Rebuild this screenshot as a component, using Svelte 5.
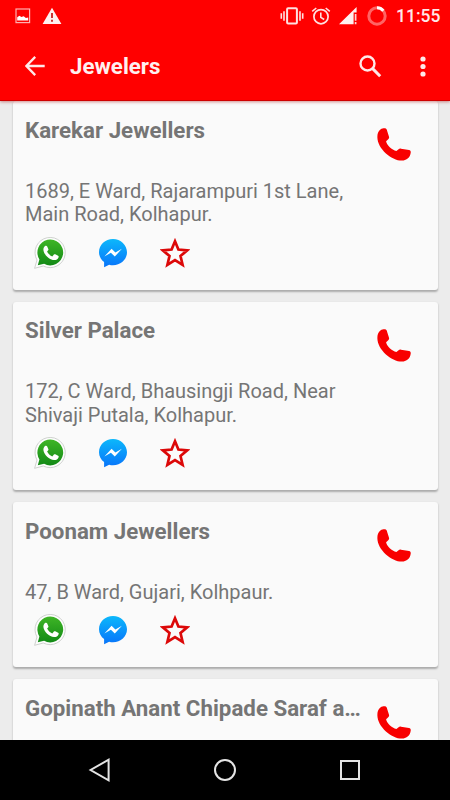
<script>
  /**
   * Jewelers listing - cards with contact shortcuts
   */
  const title = 'Jewelers';
  const time = '11:55';

  const shops = [
    {
      name: 'Karekar Jewellers',
      address: ['1689, E Ward, Rajarampuri 1st Lane,', 'Main Road, Kolhapur.']
    },
    {
      name: 'Silver Palace',
      address: ['172, C Ward, Bhausingji Road, Near', 'Shivaji Putala, Kolhapur.']
    },
    {
      name: 'Poonam Jewellers',
      address: ['47, B Ward, Gujari, Kolhpaur.']
    },
    {
      name: 'Gopinath Anant Chipade Saraf a…',
      address: []
    }
  ];
</script>

<div class="screen">
  <header>
    <div class="status-bar">
      <svg class="picture" width="16" height="16" viewBox="0 0 16 16">
        <rect x="1" y="1" width="13.6" height="13.6" fill="none" stroke="#ffb0b0" stroke-width="1.2" />
        <path d="M2.2 12.6V9.3l2.2-1.6 2 1.3 2.3-.8 2.2 1.8 2.3-.5v3.1z" fill="#fff" />
      </svg>
      <svg class="warning" width="20" height="18" viewBox="0 0 20 18">
        <path d="M10 .8 19.4 17H.6z" fill="#fff0f0" />
        <path d="M10 6v5M10 12.8v2" stroke="#c33" stroke-width="2" />
      </svg>
      <div class="status-icons">
        <svg width="24" height="18" viewBox="0 0 24 18">
          <rect x="7.1" y="1.2" width="9.8" height="15.4" rx="1" fill="none" stroke="#ffe0e0" stroke-width="2" />
          <path d="M4 4.3v9.4M1.3 6.3v5.4M20 4.3v9.4M22.7 6.3v5.4" stroke="#ffe0e0" stroke-width="1.6" />
        </svg>
        <svg class="alarm" width="20" height="18" viewBox="0 0 20 18">
          <circle cx="10" cy="9.7" r="7.1" fill="none" stroke="#ffe0e0" stroke-width="1.7" />
          <path d="M1.2 4.3 5.3 1M18.8 4.3 14.7 1M9.8 5.5v4.8l3.4 2.2" fill="none" stroke="#ffe0e0" stroke-width="1.6" />
        </svg>
        <svg class="signal" width="19" height="18" viewBox="0 0 19 18">
          <path d="M0 17.2 17.6 0v5.4h-3v11.8z" fill="#fff0f0" />
          <path d="M16.6 7v6.8M16.6 15.1v2.2" stroke="#ffd0d0" stroke-width="1.7" />
        </svg>
        <svg class="battery" width="20" height="20" viewBox="0 0 20 20">
          <circle cx="10" cy="10" r="8.2" fill="none" stroke="#ff6464" stroke-width="3" />
          <path d="M10 1.8a8.2 8.2 0 0 1 6.3 2.9" fill="none" stroke="#fff" stroke-width="3" />
        </svg>
        <span class="time">{time}</span>
      </div>
    </div>

    <div class="app-bar">
      <button class="back" aria-label="back">
        <svg width="20" height="20" viewBox="0 0 20 20">
          <path d="M19.7 10H1.8M10.2 .9 1.4 10l8.8 9.1" fill="none" stroke="#ffe8e8" stroke-width="2.3" />
        </svg>
      </button>
      <h1>{title}</h1>
      <button class="search" aria-label="search">
        <svg width="23" height="23" viewBox="0 0 23 23">
          <circle cx="8.5" cy="8.5" r="7" fill="none" stroke="#ffe8e8" stroke-width="2.4" />
          <path d="m13.4 13.4 7.8 7.8" stroke="#ffe8e8" stroke-width="3" />
        </svg>
      </button>
      <button class="more" aria-label="more options">
        <svg width="6" height="21" viewBox="0 0 6 21">
          <g fill="#ffe8e8">
            <circle cx="3" cy="3" r="2.6" />
            <circle cx="3" cy="10.5" r="2.6" />
            <circle cx="3" cy="18" r="2.6" />
          </g>
        </svg>
      </button>
    </div>
  </header>

  <main>
    {#each shops as shop}
      <article class="card">
        <div class="card-head">
          <h2>{shop.name}</h2>
          <button class="call" aria-label="call">
            <svg width="34" height="34" viewBox="0 0 34 34">
              <path
                d="M.4 8.2C.5 4.3 2.5 1.2 5.5.5 7.5 0 9.2.3 9.7 1.5l2.3 7.2c.4 1.300-.1 2.100-1 2.900l-1.900 1.600c.6 3.800 5.700 8.700 10.300 9.700l2.200-1.700c.7-.6 1.500-.7 2.400-.5l8 1.400c1.500.3 1.900 1.300 1.700 2.700-.5 4.300-3.400 7-7.100 7.700C15.600 34-.5 20.300.4 8.200z"
                fill="#f80000"
              />
            </svg>
          </button>
        </div>

        <p class="address">
          {#each shop.address as line}
            <span>{line}</span>
          {/each}
        </p>

        <div class="actions">
          <svg class="whatsapp" width="32" height="32" viewBox="0 0 32 32">
            <defs>
              <linearGradient id="green" x1="0" y1="0" x2="0" y2="1">
                <stop offset="0" stop-color="#3fb526" />
                <stop offset="1" stop-color="#128a16" />
              </linearGradient>
            </defs>
            <path
              d="M.6 31.300 3 23A15.100 15.100 0 1 1 9.300 29z"
              fill="#fdfdfd"
              stroke="#c9cdc9"
              stroke-width=".9"
            />
            <path d="M3.800 28.300 5.400 22.400A12.900 12.900 0 1 1 10.100 26.800z" fill="url(#green)" />
            <path
              d="M11 9.100c.8-.7 1.800-.6 2.200.3l1.200 2.800c.2.6-.1 1.100-1.300 2.400 1.100 2.300 2.800 3.900 5.200 4.800l1.600-1.800c.4-.5.8-.5 1.400-.3l2.800 1.400c.7.4.7.7.5 1.500-.5 2-2.800 3-4.500 2.900-4.800-.4-10.200-5.300-10.700-10.100-.1-1.700.6-3 1.600-3.900z"
              fill="#fff"
            />
          </svg>
          <svg class="messenger" width="30" height="30" viewBox="0 0 30 30">
            <defs>
              <linearGradient id="blue" x1="0" y1="0" x2="0" y2="1">
                <stop offset="0" stop-color="#0cb8fb" />
                <stop offset="1" stop-color="#0874fa" />
              </linearGradient>
            </defs>
            <path
              d="M15 .9C7.200.9 1 6.800 1 14.200c0 4 2 7.500 5.100 9.900v5.200l5-2.600c1.200.4 2.600.5 3.900.5 7.800 0 14-5.800 14-13S22.800.9 15 .9z"
              fill="url(#blue)"
            />
            <path d="m6.400 18.500 7.200-7.800 3.800 3.800 6.500-3.800-7.100 7.900-3.900-3.900z" fill="#fff" />
          </svg>
          <svg class="star" width="30" height="30" viewBox="0 0 30 30">
            <path
              d="m15 3.300 3.400 8.200 8.800.8-6.700 5.800 2.100 8.700-7.600-4.600-7.600 4.600 2.100-8.700-6.700-5.800 8.800-.8z"
              fill="none"
              stroke="#dc0808"
              stroke-width="2.700"
            />
          </svg>
        </div>
      </article>
    {/each}
  </main>

  <nav>
    <svg width="24" height="26" viewBox="0 0 24 26">
      <path d="M20.600 2.700v20.600L2.600 13z" fill="none" stroke="#e4e4e4" stroke-width="2" />
    </svg>
    <svg width="24" height="24" viewBox="0 0 24 24">
      <circle cx="12" cy="12" r="10" fill="none" stroke="#e4e4e4" stroke-width="2" />
    </svg>
    <svg width="24" height="24" viewBox="0 0 24 24">
      <rect x="3" y="3" width="18" height="18" fill="none" stroke="#e4e4e4" stroke-width="2" />
    </svg>
  </nav>
</div>

<style>
  .screen {
    width: 450px;
    height: 800px;
    display: flex;
    flex-direction: column;
    overflow: hidden;
    background: #ececec;
    color: #757575;
    font-family: Roboto, sans-serif;
  }

  svg {
    display: block;
    flex: none;
  }

  button {
    padding: 0;
    border: none;
    background: none;
  }

  h1,
  h2,
  p {
    margin: 0;
  }

  header {
    flex: none;
    height: 100px;
    background: #ff0000;
    border-bottom: 1px solid #cf0000;
    box-shadow: 0 1px 3px rgba(160, 0, 0, 0.45);
    z-index: 1;
  }

  .status-bar {
    height: 32px;
    display: flex;
    align-items: center;
    padding: 0 10px 0 15px;
  }

  .warning {
    margin-left: 11px;
  }

  .status-icons {
    display: flex;
    align-items: center;
    margin-left: auto;
  }

  .alarm {
    margin-left: 7px;
  }

  .signal {
    margin-left: 8px;
  }

  .battery {
    margin-left: 9px;
  }

  .time {
    width: 44px;
    margin-left: 9px;
    color: #ffe8e8;
    font-size: 17.5px;
    font-weight: 500;
    line-height: 33px;
    white-space: nowrap;
  }

  .app-bar {
    height: 68px;
    display: flex;
    align-items: center;
    padding: 0 24.5px 0 25px;
  }

  h1 {
    margin-left: 25px;
    color: #fff0f0;
    font-size: 22.3px;
    font-weight: 700;
    line-height: 70px;
  }

  .search {
    margin-left: auto;
  }

  .more {
    margin-left: 38px;
  }

  main {
    flex: 1;
    min-height: 0;
    display: flex;
    flex-direction: column;
    gap: 12px;
    padding: 0.4px 12.5px 0;
    overflow: hidden;
  }

  .card {
    flex: none;
    box-sizing: border-box;
    padding: 12.5px 12.5px 21px;
    background: #fafafa;
    border-radius: 3px;
    box-shadow: 0 1.5px 2px rgba(0, 0, 0, 0.28);
  }

  .card-head {
    height: 66px;
    display: flex;
    align-items: flex-start;
    justify-content: space-between;
  }

  h2 {
    width: 345px;
    padding-top: 3px;
    font-size: 22.3px;
    font-weight: 700;
    line-height: 27px;
    white-space: nowrap;
  }

  .call {
    margin: 14.4px 14px 0 0;
  }

  .address {
    font-size: 20px;
    line-height: 23.5px;
  }

  .address span {
    display: block;
    white-space: nowrap;
  }

  .actions {
    height: 32px;
    display: flex;
    align-items: center;
    margin-top: 10px;
    padding-left: 9px;
  }

  .messenger {
    margin-left: 32px;
  }

  .star {
    margin-left: 32px;
  }

  nav {
    flex: none;
    height: 60px;
    display: flex;
    align-items: center;
    justify-content: space-between;
    box-sizing: border-box;
    padding: 0 88px;
    background: #000;
    z-index: 1;
  }
</style>
